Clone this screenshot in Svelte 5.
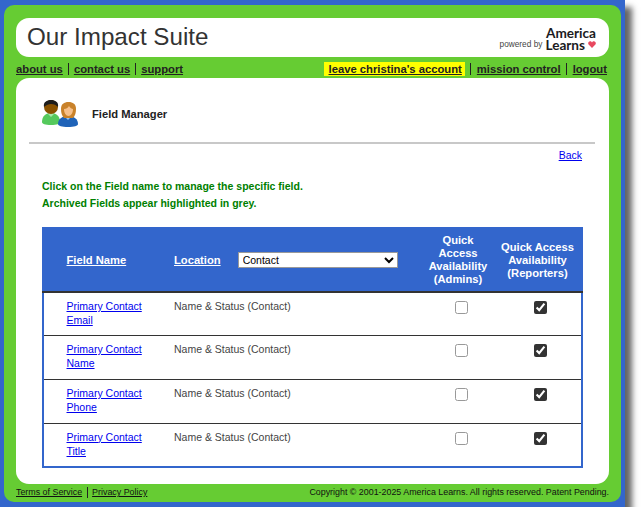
<script>
  const rows = ['Email', 'Name', 'Phone', 'Title'];
</script>

<div class="frame">
  <div class="green">
    <header class="top">
      <h1>Our Impact Suite</h1>
      <div class="logo">
        <span class="powered">powered by</span>
        <div class="brand">
          <span>America</span>
          <span class="learns">Learns
            <svg class="heart" viewBox="0 0 10 9" width="8" height="7"><path d="M5 9 0.6 4.6C-.6 3 .4.4 2.6.4 3.6.4 4.5 1 5 1.8 5.5 1 6.4.4 7.4.4 9.6.4 10.6 3 9.4 4.6Z" fill="#e8485f"/></svg>
          </span>
        </div>
      </div>
    </header>

    <nav class="nav">
      <div class="links tight">
        <a href="#a">about us</a><i></i><a href="#a">contact us</a><i></i><a href="#a">support</a>
      </div>
      <div class="links">
        <span class="hl"><a href="#a">leave christina's account</a></span><i></i><a href="#a">mission control</a><i></i><a href="#a">logout</a>
      </div>
    </nav>

    <main class="content">
      <div class="title-row">
        <svg class="people" viewBox="0 0 38 30" width="38" height="30">
          <path d="M0 23c0-6 4-9 9-9s9 3 9 9c0 2-3 3-9 3s-9-1-9-3Z" fill="#55c95c"/>
          <path d="M6 15l3 3 3-3-1-1H7Z" fill="#a6e8a8"/>
          <circle cx="9" cy="8" r="7" fill="#8a5200"/>
          <path d="M2 8C1 3 5 1 9 1s8 2 7 7c-2-2-4-3-7-3-2 0-5 1-7 3Z" fill="#1d1d1d"/>
          <path d="M16 25c0-5 4-8 10-8s10 3 10 8c0 2-4 3-10 3s-10-1-10-3Z" fill="#1f63b8"/>
          <path d="M22 17l4 4 4-4-1-1h-6Z" fill="#9cc4ea"/>
          <path d="M19 10c0-5 3-7 7.500-7S34 5 34 10c0 4-1 7-3 9H22c-2-2-3-5-3-9Z" fill="#c9822a"/>
          <path d="M22 10c2 0 4-1 5-3 1 2 3 3 4 3 0 4-2 7-4.500 7S22 14 22 10Z" fill="#f7c08a"/>
        </svg>
        <strong>Field Manager</strong>
      </div>
      <hr />
      <div class="back"><a href="#a">Back</a></div>
      <p class="note">Click on the Field name to manage the specific field.<br />Archived Fields appear highlighted in grey.</p>

      <table>
        <colgroup>
          <col class="c1" /><col class="c2" /><col class="c3" /><col class="c4" />
        </colgroup>
        <thead>
          <tr>
            <th class="name"><a href="#a">Field Name</a></th>
            <th class="loc">
              <div class="loc-in">
                <a href="#a">Location</a>
                <select><option>Contact</option></select>
              </div>
            </th>
            <th>Quick<br />Access<br />Availability<br />(Admins)</th>
            <th>Quick Access<br />Availability<br />(Reporters)</th>
          </tr>
        </thead>
        <tbody>
          {#each rows as r}
            <tr>
              <td class="name"><a href="#a">Primary Contact<br />{r}</a></td>
              <td class="loc">Name &amp; Status (Contact)</td>
              <td class="chk"><input type="checkbox" /></td>
              <td class="chk"><input type="checkbox" checked /></td>
            </tr>
          {/each}
        </tbody>
      </table>
    </main>

    <footer class="foot">
      <div class="links small">
        <a href="#a">Terms of Service</a><i></i><a href="#a">Privacy Policy</a>
      </div>
      <span>Copyright © 2001-2025 America Learns. All rights reserved. Patent Pending.</span>
    </footer>
  </div>
</div>

<style>
  :global(body) {
    margin: 0;
    background: #fff;
    font-family: "Liberation Sans", Arial, sans-serif;
  }
  .frame {
    box-sizing: border-box;
    width: 625px;
    height: 507px;
    padding: 5px 4px;
    background: #3366cc;
    box-shadow: 7px 7px 6px #666;
  }
  .green {
    box-sizing: border-box;
    height: 497px;
    padding: 13px 12px 0;
    background: #66cc33;
    border-radius: 10px;
    display: flex;
    flex-direction: column;
  }
  .top {
    height: 39px;
    background: #fff;
    border-radius: 13px;
    display: flex;
    justify-content: space-between;
    align-items: center;
    padding: 0 13px 0 11px;
  }
  h1 {
    margin: 0 0 1px;
    font-size: 24.2px;
    font-weight: 400;
    color: #333;
  }
  .logo {
    display: flex;
    align-items: flex-end;
    gap: 3px;
    margin-top: 2px;
    color: #1b1b22;
    font-family: Lato, sans-serif;
  }
  .powered {
    font-size: 8.3px;
    color: #444;
    font-family: "Liberation Sans", sans-serif;
    line-height: 11px;
    margin-bottom: 1px;
  }
  .brand {
    display: flex;
    flex-direction: column;
    align-items: flex-end;
    font-size: 13.6px;
    font-weight: 700;
    line-height: 12px;
  }
  .learns {
    display: flex;
    align-items: center;
    gap: 3px;
  }
  .heart { display: block; }
  .nav {
    height: 21px;
    box-sizing: border-box;
    padding: 2px 2px 0 0;
    display: flex;
    justify-content: space-between;
    align-items: center;
    font-size: 11.25px;
    font-weight: 700;
  }
  .links {
    display: flex;
    align-items: center;
  }
  .links a { color: #222; }
  .links i {
    width: 1px;
    height: 12px;
    background: #222;
    margin: 0 5.5px;
  }
  .links.tight i { margin: 0 5px; }
  .hl {
    background: #ffff00;
    padding: 0 3px 0 5px;
    line-height: 14px;
  }
  .content {
    box-sizing: border-box;
    height: 406px;
    background: #fff;
    border-radius: 13px;
    padding: 0 14px 0 13px;
    font-size: 10.500px;
  }
  .title-row {
    height: 64px;
    box-sizing: border-box;
    padding: 7px 0 0 13px;
    display: flex;
    align-items: center;
    gap: 12px;
    font-weight: 700;
    color: #222;
  }
  .title-row strong { font-size: 11.2px; }
  .people { display: block; }
  hr {
    margin: 0;
    border: 0;
    height: 2px;
    background: #c8c8c8;
  }
  .back {
    margin-top: 4px;
    text-align: right;
    padding-right: 13px;
    line-height: 14px;
  }
  .back a { color: #0000ee; }
  .note {
    margin: 16px 0 0 13px;
    color: #008000;
    font-size: 10.500px;
    font-weight: 700;
    line-height: 17px;
  }
  table {
    margin: 15px 0 0 13px;
    width: 539px;
    table-layout: fixed;
    border-collapse: collapse;
    border: 2px solid #3366cc;
    font-size: 10.500px;
    color: #444;
  }
  .c1 { width: 131px; }
  .c2 { width: 248px; }
  .c3 { width: 72px; }
  .c4 { width: 88px; }
  thead tr { height: 64px; }
  th {
    background: #3366cc;
    color: #fff;
    font-size: 11.2px;
    line-height: 13px;
    padding: 0;
    text-align: center;
    border-bottom: 2px solid #333;
  }
  th a { color: #fff; }
  th.name, th.loc { text-align: left; }
  .name { padding-left: 24px; }
  .loc { padding-left: 0; }
  .loc-in {
    display: flex;
    align-items: center;
    gap: 17px;
  }
  select {
    width: 160px;
    height: 16px;
    padding: 0;
    border: 1px solid #999;
    border-radius: 0;
    background: #fff;
    font: 400 10.500px "Liberation Sans", sans-serif;
    color: #000;
  }
  tbody tr { height: 43.700px; border-bottom: 1px solid #333; }
  tbody tr:last-child { border-bottom: 0; }
  td {
    vertical-align: top;
    padding: 6px 0 0;
    line-height: 14px;
  }
  td.name { padding-left: 22.500px; }
  th.name { padding-left: 22.500px; }
  td a { color: #0000ee; }
  .chk { text-align: center; padding: 8px 0 0 6px; }
  input[type="checkbox"] {
    margin: 0;
    width: 13px;
    height: 13px;
    accent-color: #333;
    display: inline-block;
    vertical-align: top;
  }
  input[type="checkbox"]:not(:checked) {
    appearance: none;
    box-sizing: border-box;
    background: #fff;
    border: 1px solid #999;
    border-radius: 2.500px;
  }
  .foot {
    flex: 1;
    box-sizing: border-box;
    padding-bottom: 2px;
    display: flex;
    justify-content: space-between;
    align-items: center;
    font-size: 8.900px;
    color: #111;
  }
  .small a { color: #111; }
  .links.small i { height: 11px; margin: 0 4.500px; }
</style>
